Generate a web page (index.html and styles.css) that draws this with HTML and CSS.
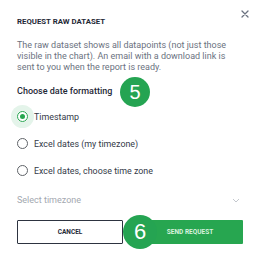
FILE: index.html
```html
<!DOCTYPE html>
<html>
<head>
<meta charset="utf-8">
<link rel="stylesheet" href="styles.css">
</head>
<body>
<div class="modal">
  <button class="close" aria-label="Close">
    <svg width="8" height="8" viewBox="0 0 8 8"><path d="M1 1L7 7M7 1L1 7" stroke="#6b7280" stroke-width="1.3" stroke-linecap="round"/></svg>
  </button>
  <div class="title">REQUEST RAW DATASET</div>
  <p class="desc">The raw dataset shows all datapoints (not just those visible in the chart). An email with a download link is sent to you when the report is ready.</p>
  <div class="heading">Choose date formatting</div>
  <div class="radios">
    <label class="radio selected"><span class="ring"><span class="dot"></span></span><span class="label">Timestamp</span></label>
    <label class="radio"><span class="ring"></span><span class="label">Excel dates (my timezone)</span></label>
    <label class="radio"><span class="ring"></span><span class="label">Excel dates, choose time zone</span></label>
  </div>
  <div class="select">
    <span class="placeholder">Select timezone</span>
    <svg width="8" height="5" viewBox="0 0 8 5"><path d="M1 1L4 4L7 1" fill="none" stroke="#c4c8ce" stroke-width="1"/></svg>
  </div>
  <div class="actions">
    <button class="btn cancel">CANCEL</button>
    <button class="btn send">SEND REQUEST</button>
  </div>
  <div class="badge b5">5</div>
  <div class="badge b6">6</div>
</div>
</body>
</html>
```
FILE: styles.css
```css
* { box-sizing: border-box; }
html, body { margin: 0; padding: 0; background: #fff; }
body { width: 260px; height: 259px; overflow: hidden; font-family: Roboto, "Liberation Sans", Arial, sans-serif; }
.modal { position: relative; width: 260px; height: 259px; padding: 17px 17px 0 17px; display: flex; flex-direction: column; }
.close { position: absolute; top: 10px; right: 11px; width: 8px; height: 8px; padding: 0; border: 0; background: none; display: block; }
.close svg { display: block; }
.title { font-size: 7.8px; line-height: 10px; font-weight: 700; color: #1f2937; }
.desc { margin: 13px 0 0 0; font-size: 9px; line-height: 11px; color: #6b7280; }
.heading { margin-top: 13px; font-size: 9px; line-height: 11px; font-weight: 500; color: #1f2937; }
.radios { margin-top: 6px; display: flex; flex-direction: column; }
.radio { height: 27px; display: flex; align-items: center; gap: 6px; font-size: 8.9px; color: #343a48; }
.ring { width: 11px; height: 11px; border-radius: 50%; border: 1.2px solid #5f6368; position: relative; flex: none; display: flex; align-items: center; justify-content: center; }
.selected .ring { border-color: #27a650; box-shadow: 0 0 0 6px #e4f4ea; }
.dot { width: 5px; height: 5px; border-radius: 50%; background: #27a650; }
.select { margin-top: 6px; height: 20px; display: flex; align-items: center; justify-content: space-between; padding-right: 3px; }
.placeholder { font-size: 9px; color: #a3a8b0; }
.select svg { display: block; }
.actions { margin-top: 10px; display: flex; gap: 14px; }
.btn { width: 106px; height: 24px; font-family: inherit; font-size: 6.5px; font-weight: 700; padding: 0; }
.cancel { background: #fff; border: 1px solid #2d3340; color: #1f2937; border-radius: 1px; }
.send { background: #27a650; border: 0; color: #d8f2df; border-radius: 1px; }
.badge { position: absolute; border-radius: 50%; background: #25a452; color: #fff; display: flex; align-items: center; justify-content: center; font-family: "Liberation Sans", Arial, sans-serif; }
.b5 { left: 120px; top: 77px; width: 30px; height: 30px; font-size: 20px; }
.b6 { left: 123px; top: 215px; width: 34px; height: 34px; font-size: 22px; }
```
